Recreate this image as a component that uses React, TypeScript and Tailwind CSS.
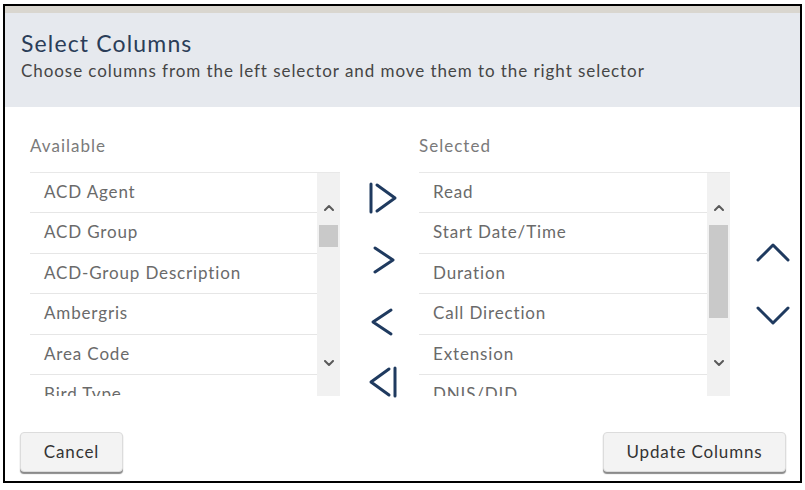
import React from 'react';

const AVAILABLE = ['ACD Agent', 'ACD Group', 'ACD-Group Description', 'Ambergris', 'Area Code', 'Bird Type'];
const SELECTED = ['Read', 'Start Date/Time', 'Duration', 'Call Direction', 'Extension', 'DNIS/DID'];

const NAVY = '#1f3a5f';

function MoveIcon({ kind }: { kind: 'all-right' | 'right' | 'left' | 'all-left' }) {
  return (
    <svg width="30" height="32" viewBox="0 0 30 32" fill="none" stroke={NAVY} strokeWidth="3" strokeLinecap="round" strokeLinejoin="round">
      {kind === 'all-right' && (
        <>
          <line x1="3" y1="2" x2="3" y2="30" />
          <polyline points="9,3 27,16 9,29" />
        </>
      )}
      {kind === 'right' && <polyline points="7,4 25,16 7,28" />}
      {kind === 'left' && <polyline points="23,4 5,16 23,28" />}
      {kind === 'all-left' && (
        <>
          <polyline points="21,3 3,16 21,29" />
          <line x1="27" y1="2" x2="27" y2="30" />
        </>
      )}
    </svg>
  );
}

function OrderIcon({ up }: { up?: boolean }) {
  return (
    <svg width="34" height="22" viewBox="0 0 34 22" fill="none" stroke={NAVY} strokeWidth="3" strokeLinecap="round" strokeLinejoin="round">
      <polyline points={up ? '2,19 17,4 32,19' : '2,3 17,18 32,3'} />
    </svg>
  );
}

function ScrollChevron({ up }: { up?: boolean }) {
  return (
    <svg width="10" height="7" viewBox="0 0 10 7" fill="none" stroke="#5a5a5a" strokeWidth="2" strokeLinecap="round" strokeLinejoin="round">
      <polyline points={up ? '1,6 5,2 9,6' : '1,1 5,5 9,1'} />
    </svg>
  );
}

function ListBox({ items, width, thumbTop, thumbHeight }: { items: string[]; width: number; thumbTop: number; thumbHeight: number }) {
  return (
    <div className="flex h-[224px] border-t border-[#e8e8e8]" style={{ width }}>
      <div className="flex-1 overflow-hidden">
        {items.map((item) => (
          <div
            key={item}
            className="flex h-[40.4px] shrink-0 items-center border-b border-[#e6e6e6] pl-[14px] text-[17px] tracking-[0.05em] text-[#6a6a6a]"
          >
            <span className="-mt-[2px] whitespace-nowrap">{item}</span>
          </div>
        ))}
      </div>
      <div className="relative flex w-[23px] flex-col items-center bg-[#f1f1f1]">
        <div className="mt-[31px]">
          <ScrollChevron up />
        </div>
        <div className="absolute left-[2px] right-[2px] bg-[#c9c9c9]" style={{ top: thumbTop, height: thumbHeight }} />
        <div className="mt-auto mb-[29px]">
          <ScrollChevron />
        </div>
      </div>
    </div>
  );
}

function Button({ children, width }: { children: React.ReactNode; width: number }) {
  return (
    <button
      className="h-[40px] rounded-[4px] border border-[#dcdcdc] bg-[#f3f3f3] text-[17px] tracking-[0.05em] text-[#333] shadow-[0_2px_1px_#8a8a8a]"
      style={{ width }}
    >
      {children}
    </button>
  );
}

export default function App() {
  return (
    <div className="h-[490px] w-[805px] bg-white pl-[3px] pt-[4px]" style={{ fontFamily: 'Lato, "Open Sans", sans-serif' }}>
      <div className="flex h-[479px] w-[799px] flex-col border-2 border-black">
        <div className="h-[7px] bg-[#d9d6cf]" />
        <div className="h-[94px] bg-[#e6e9ee] pl-[16px] pt-[16px]">
          <h1 className="text-[23px] leading-[28px] tracking-[0.05em] text-[#2b3d58]">Select Columns</h1>
          <p className="mt-[3px] text-[17px] leading-[22px] tracking-[0.055em] text-[#454545]">
            Choose columns from the left selector and move them to the right selector
          </p>
        </div>

        <div className="flex pl-[25px] pt-[28px]">
          <div>
            <div className="h-[37px] text-[17px] leading-[22px] tracking-[0.06em] text-[#7a7a7a]">Available</div>
            <ListBox items={AVAILABLE} width={310} thumbTop={52} thumbHeight={22} />
          </div>

          <div className="flex w-[79px] flex-col items-center pt-[47px]">
            <div className="flex h-[62px] items-start pl-[6px]">
              <MoveIcon kind="all-right" />
            </div>
            <div className="flex h-[62px] items-start pl-[6px]">
              <MoveIcon kind="right" />
            </div>
            <div className="flex h-[60px] items-start pl-[6px]">
              <MoveIcon kind="left" />
            </div>
            <div className="pl-[6px]">
              <MoveIcon kind="all-left" />
            </div>
          </div>

          <div>
            <div className="h-[37px] text-[17px] leading-[22px] tracking-[0.06em] text-[#7a7a7a]">Selected</div>
            <ListBox items={SELECTED} width={311} thumbTop={52} thumbHeight={93} />
          </div>

          <div className="flex w-[69px] flex-col items-center gap-[42px] pl-[17px] pt-[106px]">
            <OrderIcon up />
            <OrderIcon />
          </div>
        </div>

        <div className="mt-auto flex justify-between pb-[9px] pl-[15px] pr-[14px]">
          <Button width={103}>Cancel</Button>
          <Button width={183}>Update Columns</Button>
        </div>
      </div>
    </div>
  );
}
